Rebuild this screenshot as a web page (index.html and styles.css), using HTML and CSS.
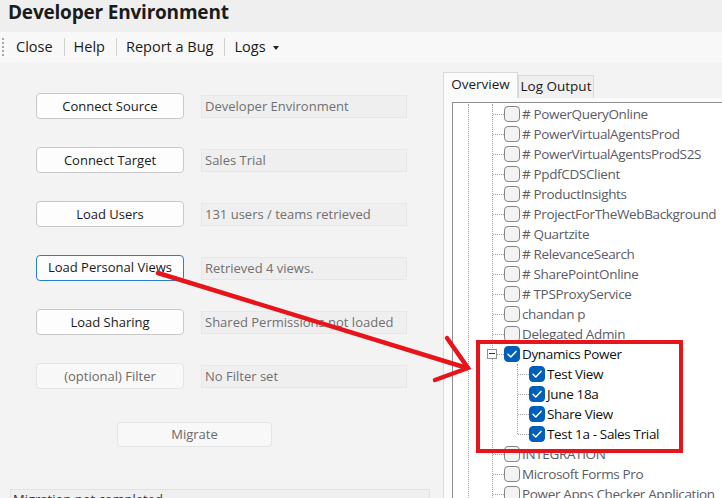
FILE: index.html
```html
<!DOCTYPE html>
<html>
<head>
<meta charset="utf-8">
<link rel="stylesheet" href="styles.css">
</head>
<body>
<div class="app">
  <div class="titlebar">Developer Environment</div>
  <div class="toolbar">
    <span class="grip"></span>
    <span class="tb-item">Close</span><span class="tb-sep"></span>
    <span class="tb-item">Help</span><span class="tb-sep"></span>
    <span class="tb-item">Report a Bug</span><span class="tb-sep"></span>
    <span class="tb-item">Logs <span class="caret"></span></span>
  </div>
  <div class="main">
    <div class="left">
      <div class="controls">
        <div class="row"><div class="btn">Connect Source</div><div class="field">Developer Environment</div></div>
        <div class="row"><div class="btn">Connect Target</div><div class="field">Sales Trial</div></div>
        <div class="row"><div class="btn">Load Users</div><div class="field">131 users / teams retrieved</div></div>
        <div class="row"><div class="btn focused">Load Personal Views</div><div class="field">Retrieved 4 views.</div></div>
        <div class="row"><div class="btn">Load Sharing</div><div class="field">Shared Permissions not loaded</div></div>
        <div class="row"><div class="btn disabled">(optional) Filter</div><div class="field">No Filter set</div></div>
        <div class="btn disabled migrate">Migrate</div>
      </div>
      <div class="status">Migration not completed</div>
    </div>
    <div class="right">
      <div class="tabs">
        <div class="tab active">Overview</div>
        <div class="tab">Log Output</div>
      </div>
      <div class="tabpanel">
        <div class="tree">
          <div class="lvl0">
            <div class="lvl1">
              <div class="node"><span class="cb"></span><span class="lbl">#&nbsp;PowerQueryOnline</span></div>
              <div class="node"><span class="cb"></span><span class="lbl">#&nbsp;PowerVirtualAgentsProd</span></div>
              <div class="node"><span class="cb"></span><span class="lbl">#&nbsp;PowerVirtualAgentsProdS2S</span></div>
              <div class="node"><span class="cb"></span><span class="lbl">#&nbsp;PpdfCDSClient</span></div>
              <div class="node"><span class="cb"></span><span class="lbl">#&nbsp;ProductInsights</span></div>
              <div class="node"><span class="cb"></span><span class="lbl">#&nbsp;ProjectForTheWebBackground</span></div>
              <div class="node"><span class="cb"></span><span class="lbl">#&nbsp;Quartzite</span></div>
              <div class="node"><span class="cb"></span><span class="lbl">#&nbsp;RelevanceSearch</span></div>
              <div class="node"><span class="cb"></span><span class="lbl">#&nbsp;SharePointOnline</span></div>
              <div class="node"><span class="cb"></span><span class="lbl">#&nbsp;TPSProxyService</span></div>
              <div class="node"><span class="cb"></span><span class="lbl">chandan p</span></div>
              <div class="node"><span class="cb"></span><span class="lbl">Delegated Admin</span></div>
              <div class="node"><span class="expander"></span><span class="cb checked"><svg viewBox="0 0 16 16" width="16" height="16"><polyline points="4,8.3 6.8,11 12,5.4" fill="none" stroke="#fff" stroke-width="1.5" stroke-linecap="round" stroke-linejoin="round"/></svg></span><span class="lbl dark">Dynamics Power</span></div>
              <div class="children">
                <div class="node"><span class="cb checked"><svg viewBox="0 0 16 16" width="16" height="16"><polyline points="4,8.3 6.8,11 12,5.4" fill="none" stroke="#fff" stroke-width="1.5" stroke-linecap="round" stroke-linejoin="round"/></svg></span><span class="lbl dark">Test View</span></div>
                <div class="node"><span class="cb checked"><svg viewBox="0 0 16 16" width="16" height="16"><polyline points="4,8.3 6.8,11 12,5.4" fill="none" stroke="#fff" stroke-width="1.5" stroke-linecap="round" stroke-linejoin="round"/></svg></span><span class="lbl dark">June 18a</span></div>
                <div class="node"><span class="cb checked"><svg viewBox="0 0 16 16" width="16" height="16"><polyline points="4,8.3 6.8,11 12,5.4" fill="none" stroke="#fff" stroke-width="1.5" stroke-linecap="round" stroke-linejoin="round"/></svg></span><span class="lbl dark">Share View</span></div>
                <div class="node"><span class="cb checked"><svg viewBox="0 0 16 16" width="16" height="16"><polyline points="4,8.3 6.8,11 12,5.4" fill="none" stroke="#fff" stroke-width="1.5" stroke-linecap="round" stroke-linejoin="round"/></svg></span><span class="lbl dark">Test 1a - Sales Trial</span></div>
              </div>
              <div class="node"><span class="cb"></span><span class="lbl">INTEGRATION</span></div>
              <div class="node"><span class="cb"></span><span class="lbl">Microsoft Forms Pro</span></div>
              <div class="node"><span class="cb"></span><span class="lbl">Power Apps Checker Application</span></div>
            </div>
          </div>
        </div>
      </div>
    </div>
  </div>
  <svg class="annot" viewBox="0 0 722 498" width="722" height="498">
    <rect x="478" y="342" width="203" height="109" fill="none" stroke="#e8141c" stroke-width="4"/>
    <line x1="158" y1="273" x2="467" y2="368" stroke="#e8141c" stroke-width="4.5" stroke-linecap="round"/>
    <polyline points="447,338 468,368 435,380" fill="none" stroke="#e8141c" stroke-width="4.5" stroke-linecap="round" stroke-linejoin="miter"/>
  </svg>
</div>
</body>
</html>
```

FILE: styles.css
```css
* { box-sizing: border-box; }
html, body { margin: 0; padding: 0; }
body {
  width: 722px;
  height: 498px;
  overflow: hidden;
  background: #f3f3f3;
  font-family: "Open Sans", "Noto Sans", "Liberation Sans", sans-serif;
  color: #1a1a1a;
}
.app { position: relative; width: 722px; height: 498px; overflow: hidden; }

.titlebar {
  height: 32px;
  background: #efefef;
  padding-left: 8px;
  padding-top: 1px;
  font-size: 19px;
  font-weight: 700;
  line-height: 22px;
  letter-spacing: -0.2px;
  color: #1b1b1b;
}

.toolbar {
  height: 30px;
  background: #f8f8f8;
  display: flex;
  align-items: center;
  font-size: 14.5px;
  color: #1a1a1a;
}
.grip {
  width: 2px;
  height: 18px;
  margin-left: 2px;
  margin-right: 12px;
  background: repeating-linear-gradient(to bottom, #a8a8a8 0 2px, transparent 2px 4px);
}
.tb-item { line-height: 20px; }
.tb-sep { width: 1px; height: 18px; background: #d0d0d0; margin: 0 9px 0 11px; }
.caret {
  display: inline-block;
  width: 0; height: 0;
  border-left: 3.5px solid transparent;
  border-right: 3.5px solid transparent;
  border-top: 4px solid #222;
  vertical-align: middle;
  margin-left: 4px;
}

.main { display: flex; height: 436px; }
.left { width: 440px; flex: none; display: flex; flex-direction: column; }
.controls {
  padding-left: 36px;
  padding-top: 31px;
  display: flex;
  flex-direction: column;
  gap: 28px;
}
.row { display: flex; align-items: center; gap: 17px; height: 26px; }
.btn {
  width: 148px;
  height: 26px;
  background: #fdfdfd;
  border: 1px solid #c9c9c9;
  border-radius: 4px;
  font-size: 13px;
  text-align: center;
  line-height: 24px;
  color: #1a1a1a;
  flex: none;
}
.btn.focused { border: 1.5px solid #2a7fd0; line-height: 23px; }
.btn.disabled { background: #f8f8f8; border-color: #e4e4e4; color: #6a6a6a; }
.field {
  width: 206px;
  height: 23px;
  background: #efefef;
  border: 1px solid #e7e7e7;
  font-size: 13px;
  line-height: 21px;
  padding-left: 3px;
  color: #707070;
  white-space: nowrap;
  overflow: hidden;
}
.btn.migrate { width: 155px; height: 25px; margin-left: 81px; margin-top: 5px; line-height: 23px; }
.status {
  margin-left: 10px;
  margin-top: 42px;
  width: 420px;
  height: 30px;
  border: 1px solid #e2e2e2;
  background: #efefef;
  font-size: 13px;
  line-height: 18px;
  padding-left: 2px;
  color: #333;
}

.right { flex: 1; min-width: 0; padding-left: 3px; padding-top: 10px; display: flex; flex-direction: column; }
.tabs { display: flex; align-items: flex-end; height: 26px; }
.tab {
  height: 23px;
  width: 76px;
  border: 1px solid #d9d9d9;
  border-bottom: none;
  background: #f0f0f0;
  font-size: 13.5px;
  line-height: 21px;
  text-align: center;
  color: #1a1a1a;
}
.tab.active {
  width: 75px;
  height: 26px;
  background: #fbfbfb;
  line-height: 22px;
}
.tabpanel {
  flex: 1;
  min-width: 0;
  background: #fbfbfb;
  border-left: 1px solid #d9d9d9;
  padding: 4px 0 0 8px;
}
.tree {
  height: 100%;
  background: #fff;
  border: 1px solid #8e8e8e;
  border-right: none;
  border-bottom: none;
  padding-top: 1px;
  overflow: hidden;
}
.lvl0 { margin-left: 15px; border-left: 1px dotted #a0a0a0; min-height: 100%; }
.lvl1 { margin-left: 23px; border-left: 1px dotted #a0a0a0; min-height: 420px; }
.node {
  height: 20px;
  display: flex;
  align-items: center;
  position: relative;
  white-space: nowrap;
}
.node::before {
  content: "";
  width: 11px;
  border-top: 1px dotted #a0a0a0;
  flex: none;
}
.cb {
  width: 16px;
  height: 16px;
  border: 1px solid #858585;
  border-radius: 4px;
  background: #f3f3f3;
  flex: none;
  display: block;
}
.cb.checked { background: #005fb8; border-color: #005fb8; }
.cb svg { display: block; margin: -1px; }
.lbl {
  margin-left: 2px;
  font-size: 13.5px;
  letter-spacing: -0.35px;
  color: #5b5b66;
  line-height: 20px;
}
.lbl.dark { color: #111; }
.expander {
  position: absolute;
  left: -6px;
  top: 5px;
  width: 10px;
  height: 10px;
  border: 1px solid #8f8f8f;
  background: #fff;
}
.expander::after {
  content: "";
  position: absolute;
  left: 1px; right: 1px;
  top: 3px;
  height: 1px;
  background: #333;
}
.children { margin-left: 24px; position: relative; }
.children::before {
  content: "";
  position: absolute;
  left: 0;
  top: 0;
  bottom: 10px;
  border-left: 1px dotted #a0a0a0;
}
.children .node { padding-left: 1px; }

.annot { position: absolute; left: 0; top: 0; pointer-events: none; }
```
